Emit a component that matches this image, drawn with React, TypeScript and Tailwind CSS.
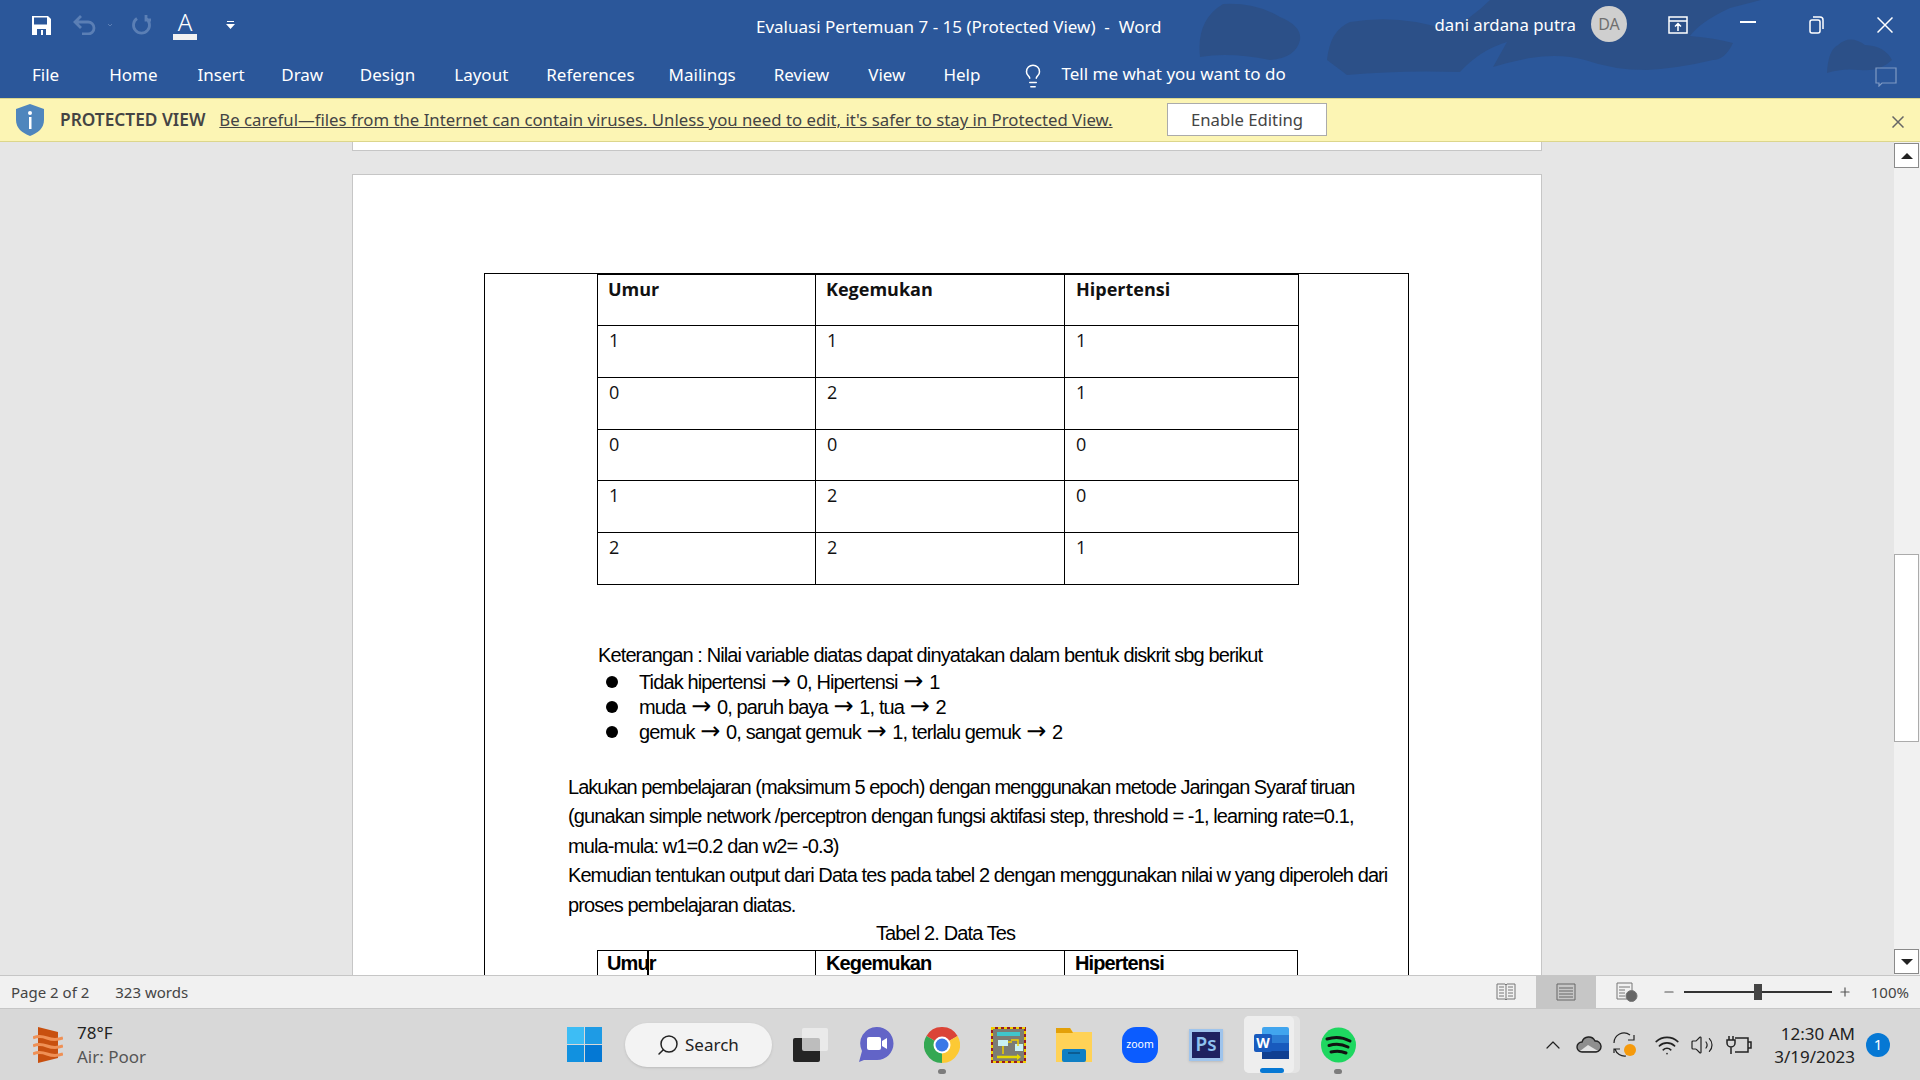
import React from 'react';
import { Search, Lightbulb, ChevronUp, Wifi, Volume2, Minus, Plus } from 'lucide-react';

const UI = "font-['Noto_Sans',sans-serif]";

const tabs = [
  { label: 'File', gap: 'mr-[50px]' },
  { label: 'Home', gap: 'mr-[40px]' },
  { label: 'Insert', gap: 'mr-[36.500px]' },
  { label: 'Draw', gap: 'mr-[36.500px]' },
  { label: 'Design', gap: 'mr-[39px]' },
  { label: 'Layout', gap: 'mr-[38px]' },
  { label: 'References', gap: 'mr-[34px]' },
  { label: 'Mailings', gap: 'mr-[38px]' },
  { label: 'Review', gap: 'mr-[39px]' },
  { label: 'View', gap: 'mr-[38px]' },
  { label: 'Help', gap: 'mr-[40px]' },
];

const rows = [
  ['1', '1', '1'],
  ['0', '2', '1'],
  ['0', '0', '0'],
  ['1', '2', '0'],
  ['2', '2', '1'],
];

const Arrow: React.FC = () => <span className="font-['DejaVu_Sans',sans-serif] tracking-normal text-[24px] leading-none mx-[1px]">→</span>;

const App: React.FC = () => {
  return (
    <div className={`w-[1920px] h-[1080px] overflow-hidden flex flex-col ${UI}`}>
      <div className="relative h-[98px] bg-[#2b579a] text-white shrink-0">
        <svg className="absolute right-0 top-0" width="780" height="98" viewBox="1140 0 780 98">
          <path d="M1200 57Q1196 20 1223 4Q1255 2 1280 17Q1302 26 1300 40Q1296 58 1270 60Q1230 52 1200 57Z" fill="#2c5088" />
          <path d="M1327 60Q1330 30 1350 22Q1400 14 1447 30Q1470 20 1490 0H1761L1730 8Q1700 22 1690 36Q1715 38 1733 43Q1725 60 1713 60Q1680 68 1647 70Q1613 70 1585 60Q1560 53 1530 58Q1510 62 1493 67L1507 42Q1480 50 1460 72Q1400 70 1347 75Z" fill="#2c5088" />
          <path d="M1827 73Q1828 50 1838 45Q1850 34 1865 45Q1885 46 1892 60Q1880 72 1860 70Q1842 68 1827 73Z" fill="#2c5088" />
        </svg>
        <div className="relative flex h-[50px] items-center">
          <div className="flex items-center pl-[32px]">
            <svg width="19" height="19" viewBox="0 0 19 19"><path d="M0 0h16l3 3v16H0z" fill="#fff" /><path d="M2 1.500h13v7H2z" fill="#2b579a" /><path d="M5 13h9v6H5z" fill="#2b579a" /><path d="M9 14h2v5H9z" fill="#fff" /></svg>
            <svg className="ml-[22px]" width="42" height="20" viewBox="0 0 42 20" fill="none" stroke="#5b7fb5" strokeWidth="2.800"><path d="M8 1 2 7l6 6M2 7h13a6 6 0 0 1 0 12H9" /><path d="M35 9l2 2 2-2" strokeWidth="1" /></svg>
            <svg className="ml-[16px]" width="21" height="20" viewBox="0 0 21 20" fill="none" stroke="#5b7fb5" strokeWidth="2.800"><path d="M6 3.500a8 8 0 1 0 9 0M15 0v5h5" /></svg>
            <div className="ml-[21px] flex flex-col items-center w-[24px]">
              <span className="text-[24px] leading-[24px] font-light">A</span>
              <div className="w-[24px] h-[6px] bg-[#f1f1f1]" />
            </div>
            <svg className="ml-[29px]" width="9" height="9" viewBox="0 0 9 9"><path d="M1 0h7v1H1zM0 3h9L4.500 8z" fill="#fff" /></svg>
          </div>
          <div className="absolute left-[756px] top-[16px] text-[17px] leading-[22px] whitespace-pre">Evaluasi Pertemuan 7 - 15 (Protected View)  -  Word</div>
          <div className="ml-auto flex items-center">
            <span className="text-[16.800px] mr-[15px]">dani ardana putra</span>
            <div className="w-[36px] h-[36px] rounded-full bg-[#cfcfcf] text-[#6f6f6f] text-[16px] flex items-center justify-center mb-[2px]">DA</div>
            <svg className="ml-[41px]" width="20" height="18" viewBox="0 0 20 18" fill="none" stroke="#fff" strokeWidth="1.500"><path d="M1 1h18v16H1zM1 5h18M10 15V8M7 10.500l3-3 3 3" /></svg>
            <svg className="ml-[52px] mb-[6px]" width="16" height="2" viewBox="0 0 16 2"><path d="M0 0h16v2H0z" fill="#fff" /></svg>
            <svg className="ml-[53px]" width="15" height="18" viewBox="0 0 15 18" fill="none" stroke="#fff" strokeWidth="1.500"><rect x="1" y="4" width="10" height="13" rx="2" /><path d="M4 1h7a3 3 0 0 1 3 3v9" /></svg>
            <svg className="ml-[53px] mr-[27px]" width="16" height="16" viewBox="0 0 16 16" fill="none" stroke="#fff" strokeWidth="1.500"><path d="M0.500 0.500l15 15M15.500 0.500l-15 15" /></svg>
          </div>
        </div>
        <div className="relative flex h-[48px] items-start pt-[14px] text-[17px] leading-[22px]">
          <div className="flex pl-[32px]">
            {tabs.map((t) => (
              <span key={t.label} className={t.gap}>{t.label}</span>
            ))}
          </div>
          <Lightbulb className="-mt-[1px]" size={26} strokeWidth={1.400} />
          <span className="ml-[15px] -mt-[1px]">Tell me what you want to do</span>
          <svg className="absolute right-[23px] top-[17px]" width="22" height="20" viewBox="0 0 22 20" fill="none" stroke="#7f9ac4" strokeWidth="1.200"><path d="M1 1h20v15H7l-3 3v-3H1z" /></svg>
        </div>
      </div>

      <div className="h-[44px] shrink-0 bg-[#fcf5b4] border-y border-[#dcd68c] flex items-center text-[#444444] relative">
        <svg className="ml-[16px]" width="28" height="32" viewBox="0 0 28 32"><path d="M14 0l14 5v11c0 8-6 13-14 16C6 29 0 24 0 16V5z" fill="#4f86bd" /><circle cx="14" cy="9" r="2" fill="#fff" /><rect x="13" y="13" width="2.500" height="12" fill="#fff" /></svg>
        <span className="ml-[16px] text-[17.300px] font-semibold whitespace-nowrap">PROTECTED VIEW</span>
        <span className="ml-[14px] text-[16.750px] underline whitespace-nowrap">Be careful—files from the Internet can contain viruses. Unless you need to edit, it's safer to stay in Protected View.</span>
        <button className="absolute left-[1167px] top-[4px] w-[160px] h-[33px] bg-white border border-[#ababab] text-[16.700px]">Enable Editing</button>
        <svg className="absolute right-[16px] top-[17px]" width="12" height="12" viewBox="0 0 12 12" fill="none" stroke="#666666" strokeWidth="1.500"><path d="M0.500 0.500l11 11M11.500 0.500l-11 11" /></svg>
      </div>

      <div className="h-[833px] shrink-0 flex bg-[#e6e6e6] overflow-hidden">
        <div className="flex-1 min-w-0 flex flex-col items-center">
          <div className="w-[1190px] h-[9px] shrink-0 bg-white border border-t-0 border-[#c6c6c6]" />
          <div className="w-[1190px] mt-[23px] shrink-0 bg-white border border-[#c6c6c6] pt-[98px] pl-[131px] h-[1100px]">
            <div className="w-[925px] h-[1000px] border border-black">
              <div className="pl-[112px] -mt-[1px]">
                <DataTable />
              </div>
              <div className="font-['Liberation_Sans',sans-serif] text-black text-[20px] tracking-[-0.880px]">
                <p className="pl-[113px] mt-[58px] leading-[25px]">Keterangan : Nilai variable diatas dapat dinyatakan dalam bentuk diskrit sbg berikut</p>
                <ul className="pl-[113px] mt-[2px]">
                  <Li>Tidak hipertensi <Arrow /> 0, Hipertensi <Arrow /> 1</Li>
                  <Li>muda <Arrow /> 0, paruh baya <Arrow /> 1, tua <Arrow /> 2</Li>
                  <Li>gemuk <Arrow /> 0, sangat gemuk <Arrow /> 1, terlalu gemuk <Arrow /> 2</Li>
                </ul>
                <div className="pl-[83px] mt-[28px] leading-[29.500px] w-[920px]">
                  <p className="tracking-[-0.980px]">Lakukan pembelajaran (maksimum 5 epoch) dengan menggunakan metode Jaringan Syaraf tiruan</p>
                  <p>(gunakan simple network /perceptron dengan fungsi aktifasi step, threshold = -1, learning rate=0.1,</p>
                  <p>mula-mula: w1=0.2 dan w2= -0.3)</p>
                  <p className="tracking-[-0.920px]">Kemudian tentukan output dari Data tes pada tabel 2 dengan menggunakan nilai w yang diperoleh dari</p>
                  <p>proses pembelajaran diatas.</p>
                </div>
                <p className="pl-[391px] leading-[27px]">Tabel 2. Data Tes</p>
                <div className="ml-[112px] mt-[3px] w-[701px] border border-black flex font-bold h-[60px] leading-[24px]">
                  <div className="relative w-[218px] pl-[9px] border-r border-black">
                    Umur
                    <div className="absolute left-[49px] top-0 w-[1.500px] h-[26px] bg-black" />
                  </div>
                  <div className="w-[249px] pl-[10px] border-r border-black">Kegemukan</div>
                  <div className="pl-[10px]">Hipertensi</div>
                </div>
              </div>
            </div>
          </div>
        </div>
        <div className="w-[26px] shrink-0 flex flex-col bg-[#f1f1f1] pt-[1px] pb-[1px]">
          <div className="h-[25px] w-[25px] bg-white border border-[#8a8a8a] flex items-center justify-center">
            <div className="w-0 h-0 border-x-[6px] border-x-transparent border-b-[6px] border-b-[#222222]" />
          </div>
          <div className="flex-1 relative">
            <div className="absolute top-[386px] left-0 w-[25px] h-[188px] bg-white border border-[#ababab]" />
          </div>
          <div className="h-[25px] w-[25px] bg-white border border-[#8a8a8a] flex items-center justify-center">
            <div className="w-0 h-0 border-x-[6px] border-x-transparent border-t-[6px] border-t-[#222222]" />
          </div>
        </div>
      </div>

      <div className="h-[34px] shrink-0 bg-[#f1f1f1] border-y border-[#c6c6c6] flex items-center text-[15px] text-[#444444] relative">
        <span className="ml-[11px]">Page 2 of 2</span>
        <span className="ml-[26px]">323 words</span>
        <div className="ml-auto flex items-center h-full">
          <svg width="20" height="18" viewBox="0 0 20 18" fill="none" stroke="#777777"><path d="M1 1h8l1 1 1-1h8v15h-8l-1 1-1-1H1zM10 2v15M3 4h5M3 7h5M3 10h5M3 13h5M12 4h5M12 7h5M12 10h5M12 13h5" /></svg>
          <div className="ml-[20px] w-[60px] h-full bg-[#c6c6c6] flex items-center justify-center">
            <svg width="20" height="18" viewBox="0 0 20 18" fill="none" stroke="#666666"><path d="M1 1h18v16H1zM3 5h14M3 8h14M3 11h14M3 14h14" /></svg>
          </div>
          <svg className="ml-[20px]" width="22" height="20" viewBox="0 0 22 20" fill="none" stroke="#777777"><path d="M1 1h15v16H1zM3 5h11M3 8h6M3 11h6M3 14h6" /><circle cx="15.500" cy="14" r="5.500" fill="#666666" /></svg>
          <Minus className="ml-[24px]" size={14} color="#555555" />
          <div className="ml-[8px] w-[148px] h-[2px] bg-[#333333] relative">
            <div className="absolute left-[70px] -top-[7px] w-[8px] h-[16px] bg-[#444444]" />
          </div>
          <Plus className="ml-[6px]" size={14} color="#555555" />
          <span className="ml-[19px] mr-[11px]">100%</span>
        </div>
      </div>

      <div className="h-[71px] shrink-0 bg-[#d8d8d8] relative flex items-center text-[17px] text-[#222222]">
        <svg className="ml-[33px]" width="30" height="36" viewBox="0 0 30 36"><path d="M5 0l20 5v26L5 36z" fill="#c8500f" /><path d="M0 11q6-3 14 0t16 0M0 19q6-3 14 0t16 0M0 27q6-3 14 0t16 0" stroke="#ef9055" strokeWidth="3" fill="none" /></svg>
        <div className="ml-[14px] leading-[24px]">
          <div>78°F</div>
          <div className="text-[#555555]">Air: Poor</div>
        </div>
        <div className="absolute left-[567px] top-0 h-full flex items-center">
          <div className="grid grid-cols-2 gap-[1px] w-[35px] h-[35px]">
            <div className="bg-[#3dbdf5]" /><div className="bg-[#1e9be5]" /><div className="bg-[#1191e0]" /><div className="bg-[#0478d4]" />
          </div>
          <div className="ml-[23px] w-[147px] h-[44px] rounded-full bg-[#f3f3f3] flex items-center pl-[31px] shadow-sm">
            <Search size={24} className="-scale-x-100" strokeWidth={1.500} />
            <span className="ml-[5px]">Search</span>
          </div>
          <TaskIcons />
        </div>
        <div className="absolute right-[30px] top-0 h-full flex items-center">
          <ChevronUp size={24} strokeWidth={1.200} />
          <svg className="ml-[11px]" width="26" height="18" viewBox="0 0 26 18"><path d="M6 16a5 5 0 0 1 0-10 7 7 0 0 1 13-1 5.500 5.500 0 0 1 1 11z" fill="#8f8f8f" stroke="#222222" strokeWidth="1.400" /><path d="M4 15l8-6 10 6z" fill="#e4e4e4" /></svg>
          <svg className="ml-[10px]" width="28" height="26" viewBox="0 0 28 26" fill="none" stroke="#222222" strokeWidth="1.200"><path d="M2 11a10 10 0 0 1 16-8M22 3v5h-6M2 21v-4h6M3 17a10 10 0 0 0 11 7" /><circle cx="18" cy="18" r="6" fill="#f59a0c" stroke="none" /></svg>
          <Wifi className="ml-[14px]" size={26} strokeWidth={1.500} />
          <Volume2 className="ml-[10px]" size={24} strokeWidth={1.200} />
          <svg className="ml-[12px]" width="26" height="20" viewBox="0 0 26 20" fill="none" stroke="#222222" strokeWidth="1.500"><path d="M9 3h13v14H9M22 7h3v6h-3" /><path d="M3 1v4M7 1v4M1 5h8v3a4 4 0 0 1-8 0zM5 12v7" /></svg>
          <div className="ml-[22px] text-right leading-[23px] text-[17px]">
            <div>12:30 AM</div>
            <div>3/19/2023</div>
          </div>
          <div className="ml-[11px] w-[24px] h-[24px] rounded-full bg-[#0678d4] text-white text-[15px] flex items-center justify-center">1</div>
        </div>
      </div>
    </div>
  );
};

const DataTable: React.FC = () => (
  <table className="w-[701px] table-fixed border-collapse font-['Open_Sans',sans-serif] text-[18px] leading-[24px] text-[#111111]">
    <colgroup>
      <col className="w-[218px]" />
      <col className="w-[249px]" />
      <col className="w-[234px]" />
    </colgroup>
    <tbody>
      <tr className="h-[51.700px] font-bold">
        <td className="border border-black border-t-2 pl-[10px] pt-[2px] align-top">Umur</td>
        <td className="border border-black border-t-2 pl-[10px] pt-[2px] align-top">Kegemukan</td>
        <td className="border border-black border-t-2 pl-[11px] pt-[2px] align-top">Hipertensi</td>
      </tr>
      {rows.map((r, i) => (
        <tr key={i} className="h-[51.700px]">
          {r.map((c, j) => (
            <td key={j} className="border border-black pl-[11px] pt-[2px] align-top">{c}</td>
          ))}
        </tr>
      ))}
    </tbody>
  </table>
);

const Li: React.FC<{ children: React.ReactNode }> = ({ children }) => (
  <li className="flex items-center h-[25px]">
    <span className="w-[12px] h-[12px] ml-[8px] rounded-full bg-black shrink-0" />
    <span className="ml-[21px] whitespace-pre">{children}</span>
  </li>
);

const Cell: React.FC<{ dot?: boolean; children: React.ReactNode }> = ({ dot, children }) => (
  <div className="relative w-[66px] h-[71px] flex items-center justify-center">
    {children}
    {dot && <div className="absolute left-[29px] bottom-[6px] w-[8px] h-[5px] rounded-full bg-[#7c7c7c]" />}
  </div>
);

const TaskIcons: React.FC = () => (
  <div className="flex items-center ml-[5px]">
    <Cell>
      <svg width="35" height="34" viewBox="0 0 35 34"><rect x="0" y="10" width="27" height="24" rx="2" fill="#242424" /><rect x="9" y="0" width="26" height="23" rx="2" fill="#f0f0f0" fillOpacity="0.75" /></svg>
    </Cell>
    <Cell>
      <svg width="35" height="35" viewBox="0 0 35 35"><path d="M18 0a16.500 16.500 0 0 1 0 33H5l-5 2 3-11A16.500 16.500 0 0 1 18 0z" fill="#6264c7" /><rect x="8" y="10" width="14" height="13" rx="2" fill="#fff" /><path d="M23 14l5-3v11l-5-3z" fill="#fff" /></svg>
    </Cell>
    <Cell dot>
      <svg width="36" height="36" viewBox="0 0 36 36"><path d="M18 18L2.410 9A18 18 0 0 1 33.590 9Z" fill="#db4437" /><path d="M18 18L33.590 9A18 18 0 0 1 18 36Z" fill="#fcc934" /><path d="M18 18L18 36A18 18 0 0 1 2.410 9Z" fill="#34a853" /><circle cx="18" cy="18" r="8.500" fill="#fff" /><circle cx="18" cy="18" r="6.500" fill="#3b78e7" /></svg>
    </Cell>
    <Cell>
      <svg width="35" height="36" viewBox="0 0 35 36"><rect x="1" y="1" width="33" height="34" fill="#7c7c74" stroke="#9b1c1c" strokeWidth="2" /><rect x="1" y="1" width="33" height="34" fill="none" stroke="#f0d000" strokeWidth="2" strokeDasharray="3 3" /><path d="M6 5h23v4H6z" fill="#3fc6cc" /><path d="M7 13h10v6H7zM24 17h8v7h-8z" fill="#c9f1f4" /><path d="M12 19v8M20 13h7v6M17 15h4" stroke="#f0d000" strokeWidth="1.500" fill="none" /><path d="M6 30h22" stroke="#e6d800" strokeWidth="2.500" /><path d="M26 27l4 3-4 3z" fill="#e6d800" /></svg>
    </Cell>
    <Cell>
      <svg width="36" height="34" viewBox="0 0 36 34"><path d="M0 0h14l3 4h19v30H0z" fill="#ffd257" /><path d="M0 0h14l3 5H0z" fill="#e3a008" /><rect x="6" y="21" width="24" height="13" rx="2" fill="#0f7fc4" /><rect x="12" y="24" width="12" height="2" fill="#0b5c92" /></svg>
    </Cell>
    <Cell>
      <div className="w-[36px] h-[36px] rounded-[14px] bg-[#0b5cff] text-white text-[10.500px] flex items-center justify-center">zoom</div>
    </Cell>
    <Cell>
      <div className="w-[34px] h-[32px] bg-[#9fc4ec] p-[3px] shadow-sm">
        <div className="w-full h-full bg-[#1f2260] text-[#8fc3f0] text-[19px] font-semibold leading-[25px] text-center">Ps</div>
      </div>
    </Cell>
    <Cell>
      <div className="relative w-[56px] h-[57px] rounded-[5px] bg-[#e4e4e4]">
        <div className="w-[50px] h-full rounded-[5px] bg-[#eeeeee] flex items-center pl-[10px] pb-[4px]">
          <svg width="35" height="32" viewBox="0 0 35 32"><rect x="8" y="0" width="27" height="32" rx="2" fill="#41a5ee" /><rect x="8" y="8" width="27" height="8" fill="#2b7cd3" /><rect x="8" y="16" width="27" height="8" fill="#185abd" /><rect x="8" y="24" width="27" height="8" fill="#103f91" /><rect x="0" y="7" width="18" height="18" rx="2" fill="#185abd" /><text x="9" y="21" fontSize="14" fontWeight="700" textAnchor="middle" fill="#fff">W</text></svg>
        </div>
        <div className="absolute bottom-0 left-[16px] w-[24px] h-[5px] rounded bg-[#0678d4]" />
      </div>
    </Cell>
    <Cell dot>
      <svg width="35" height="36" viewBox="0 0 35 36"><circle cx="17.500" cy="18" r="17.500" fill="#1ed760" /><path d="M6 12q12-4 23 2M8 18.500q10-3 19 1.500M10 25q8-2 15 1" stroke="#111111" strokeWidth="3" fill="none" strokeLinecap="round" /></svg>
    </Cell>
  </div>
);

export default App;
